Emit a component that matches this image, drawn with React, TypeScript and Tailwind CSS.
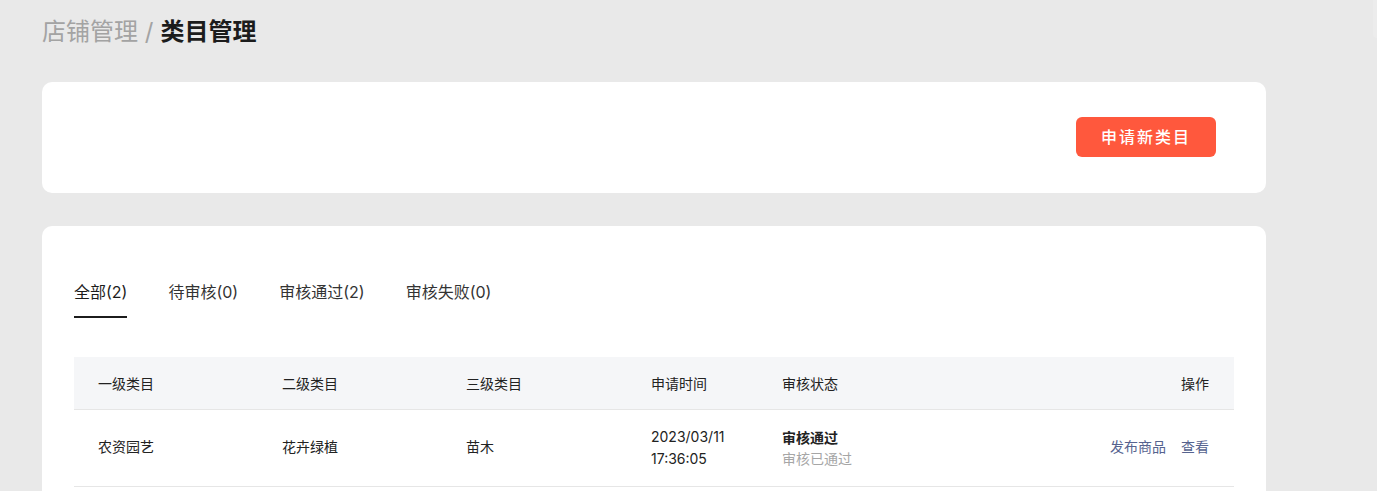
import React, { useState } from "react";

const TABS = [
  { key: "all", label: "全部(2)" },
  { key: "pending", label: "待审核(0)" },
  { key: "passed", label: "审核通过(2)" },
  { key: "failed", label: "审核失败(0)" },
];

const ROWS = [
  {
    id: 1,
    level1: "农资园艺",
    level2: "花卉绿植",
    level3: "苗木",
    date: "2023/03/11",
    time: "17:36:05",
    status: "审核通过",
    note: "审核已通过",
  },
];

const font = "font-['Inter','Noto_Sans_CJK_SC',sans-serif]";

const App = () => {
  const [activeTab, setActiveTab] = useState("all");

  return (
    <div className={`min-h-screen w-full bg-[#e9e9e9] ${font} relative`}>
      {/* sliver of the next panel at right edge */}
      <div className="absolute right-0 top-0 w-[4px] h-[38px] bg-[#ececec] rounded-bl-[4px]" />

      <div className="pl-[42px] pr-[111px] pt-[16px]">
        {/* Breadcrumb */}
        <div className="flex items-center h-[32px] text-[24px] leading-[32px]">
          <span className="text-[#a3a3a3]">店铺管理 /</span>
          <span className="ml-[7px] font-bold text-[#1c1c1c]">类目管理</span>
        </div>

        {/* Action card */}
        <div className="mt-[34px] h-[111px] bg-white rounded-[10px] flex items-center justify-end pr-[50px]">
          <button className="h-[40px] w-[140px] rounded-[6px] bg-[#ff583d] text-white text-[16px] font-medium tracking-[2px] -mt-[2px]">
            申请新类目
          </button>
        </div>

        {/* List card */}
        <div className="mt-[33px] bg-white rounded-t-[10px] px-[32px] pt-[54px] pb-[20px]">
          {/* Tabs */}
          <div className="flex gap-[41px]">
            {TABS.map((tab) => (
              <button
                key={tab.key}
                onClick={() => setActiveTab(tab.key)}
                className={`flex flex-col items-start text-[16px] leading-[24px] ${
                  activeTab === tab.key ? "text-[#1c1c1c]" : "text-[#333]"
                }`}
              >
                <span>{tab.label}</span>
                <span
                  className={`mt-[12px] h-[2px] w-full ${
                    activeTab === tab.key ? "bg-[#1c1c1c]" : "bg-transparent"
                  }`}
                />
              </button>
            ))}
          </div>

          {/* Table */}
          <div className="mt-[39px] text-[14px] text-[#222]">
            <div className="flex items-center h-[53px] bg-[#f5f6f8] border-b border-[#e6e6e6]">
              <div className="w-[184px] pl-[24px]">一级类目</div>
              <div className="w-[184px] pl-[24px]">二级类目</div>
              <div className="w-[185px] pl-[24px]">三级类目</div>
              <div className="w-[131px] pl-[24px]">申请时间</div>
              <div className="flex-1 pl-[24px]">审核状态</div>
              <div className="pr-[25px]">操作</div>
            </div>
            {ROWS.map((row) => (
              <div key={row.id} className="flex items-center h-[77px] border-b border-[#e6e6e6]">
                <div className="w-[184px] pl-[24px] -mt-[3px]">{row.level1}</div>
                <div className="w-[184px] pl-[24px] -mt-[3px]">{row.level2}</div>
                <div className="w-[185px] pl-[24px] -mt-[3px]">{row.level3}</div>
                <div className="w-[131px] pl-[24px] leading-[22px]">
                  <div>{row.date}</div>
                  <div>{row.time}</div>
                </div>
                <div className="flex-1 pl-[24px] leading-[21px]">
                  <div className="font-bold">{row.status}</div>
                  <div className="text-[#a6a6a6]">{row.note}</div>
                </div>
                <div className="pr-[25px] -mt-[3px] flex gap-[15px] text-[#56638f]">
                  <a href="#">发布商品</a>
                  <a href="#">查看</a>
                </div>
              </div>
            ))}
          </div>
        </div>
      </div>
    </div>
  );
};

export default App;
